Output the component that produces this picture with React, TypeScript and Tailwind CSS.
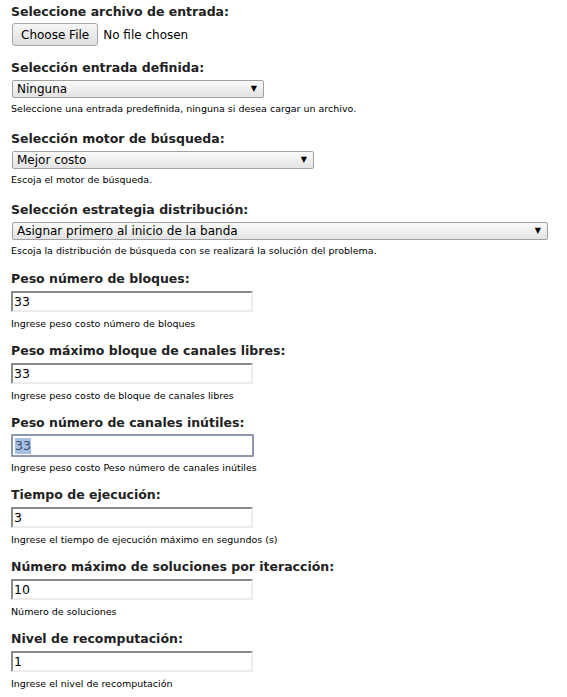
const selects = [
  {
    label: "Selección entrada definida:",
    value: "Ninguna",
    width: "w-[252px]",
    help: "Seleccione una entrada predefinida, ninguna si desea cargar un archivo.",
  },
  {
    label: "Selección motor de búsqueda:",
    value: "Mejor costo",
    width: "w-[302px]",
    help: "Escoja el motor de búsqueda.",
  },
  {
    label: "Selección estrategia distribución:",
    value: "Asignar primero al inicio de la banda",
    width: "w-[536px]",
    help: "Escoja la distribución de búsqueda con se realizará la solución del problema.",
  },
];

const inputs = [
  { label: "Peso número de bloques:", value: "33", help: "Ingrese peso costo número de bloques" },
  { label: "Peso máximo bloque de canales libres:", value: "33", help: "Ingrese peso costo de bloque de canales libres" },
  { label: "Peso número de canales inútiles:", value: "33", help: "Ingrese peso costo Peso número de canales inútiles", focused: true },
  { label: "Tiempo de ejecución:", value: "3", help: "Ingrese el tiempo de ejecución máximo en segundos (s)" },
  { label: "Número máximo de soluciones por iteracción:", value: "10", help: "Número de soluciones" },
  { label: "Nivel de recomputación:", value: "1", help: "Ingrese el nivel de recomputación" },
];

const Label = ({ children }: { children: string }) => (
  <div className="text-[12.5px] font-bold leading-[16px] text-[#222]">{children}</div>
);

const Help = ({ children }: { children: string }) => (
  <div className="text-[9.5px] leading-[12px] text-black">{children}</div>
);

export default function App() {
  return (
    <div className="bg-white min-h-[697px] px-[11px] pt-[4px] font-['DejaVu_Sans',sans-serif] text-black">
      <div>
        <Label>Seleccione archivo de entrada:</Label>
        <div className="flex items-center mt-[3px]">
          <span className="ml-[1px] h-[23px] px-[8px] flex items-center rounded-[3px] border border-[#a6a6a6] bg-gradient-to-b from-[#f6f6f6] to-[#dedede] text-[12px]">
            Choose File
          </span>
          <span className="ml-[5px] text-[12px]">No file chosen</span>
        </div>
      </div>

      {selects.map((s) => (
        <div key={s.label} className="mt-[14px] flex flex-col">
          <Label>{s.label}</Label>
          <div
            className={`${s.width} ml-[1px] mt-[4px] h-[18px] flex items-center justify-between pl-[4px] pr-[6px] rounded-[2px] border border-[#a0a0a0] bg-gradient-to-b from-[#fbfbfb] to-[#e3e3e3] text-[12px] leading-[16px]`}
          >
            <span>{s.value}</span>
            <span className="text-[8px]">▼</span>
          </div>
          <div className="mt-[5px] mb-[2px]">
            <Help>{s.help}</Help>
          </div>
        </div>
      ))}

      {inputs.map((f, i) => (
        <div key={f.label} className={i === 0 ? "mt-[12px] flex flex-col" : "mt-[13px] flex flex-col"}>
          <Label>{f.label}</Label>
          <div
            className={
              f.focused
                ? "mt-[3px] -mb-[1px] w-[243px] h-[23px] flex items-center pl-[2px] border-2 border-[#8d98ad] rounded-[1px] text-[12.5px]"
                : "mt-[4px] w-[242px] h-[21px] flex items-center pl-[1px] border-2 border-t-[#8a8a8a] border-l-[#8a8a8a] border-r-[#ececec] border-b-[#ececec] text-[12.5px]"
            }
          >
            <span className={f.focused ? "bg-[#a7bfe0] text-[#33507a] leading-[16px]" : "leading-[16px]"}>{f.value}</span>
          </div>
          <div className="mt-[6px]">
            <Help>{f.help}</Help>
          </div>
        </div>
      ))}
    </div>
  );
}
